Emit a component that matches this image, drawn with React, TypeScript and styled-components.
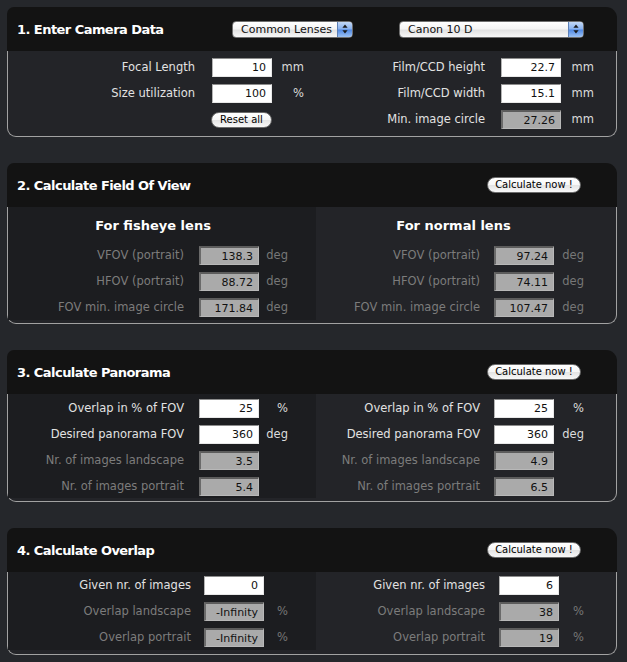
import styled, { createGlobalStyle } from "styled-components";

type Row = {
  label?: string;
  value?: string;
  unit?: string;
  ro?: boolean;
  dim?: boolean;
  button?: string;
};

type Col = {
  heading?: string;
  headShift?: number;
  dark?: boolean;
  pt: number;
  pb: number;
  unitW: number;
  pr: number;
  gap: number;
  rows: Row[];
};

type PanelData = {
  title: string;
  headRight: number;
  tools: "selects" | "calc";
  bodyPb: number;
  cols: Col[];
};

const panels: PanelData[] = [
  {
    title: "1. Enter Camera Data",
    headRight: 33,
    tools: "selects",
    bodyPb: 7,
    cols: [
      {
        pt: 7, pb: 0, unitW: 32, pr: 12, gap: 17,
        rows: [
          { label: "Focal Length", value: "10", unit: "mm" },
          { label: "Size utilization", value: "100", unit: "%" },
          { button: "Reset all" },
        ],
      },
      {
        pt: 7, pb: 0, unitW: 33, pr: 22, gap: 16,
        rows: [
          { label: "Film/CCD height", value: "22.7", unit: "mm" },
          { label: "Film/CCD width", value: "15.1", unit: "mm" },
          { label: "Min. image circle", value: "27.26", unit: "mm", ro: true },
        ],
      },
    ],
  },
  {
    title: "2. Calculate Field Of View",
    headRight: 36,
    tools: "calc",
    bodyPb: 3,
    cols: [
      {
        heading: "For fisheye lens", headShift: 18, dark: true,
        pt: 10, pb: 3, unitW: 29, pr: 28, gap: 15,
        rows: [
          { label: "VFOV (portrait)", value: "138.3", unit: "deg", ro: true, dim: true },
          { label: "HFOV (portrait)", value: "88.72", unit: "deg", ro: true, dim: true },
          { label: "FOV min. image circle", value: "171.84", unit: "deg", ro: true, dim: true },
        ],
      },
      {
        heading: "For normal lens", headShift: 25,
        pt: 10, pb: 3, unitW: 30, pr: 32, gap: 14,
        rows: [
          { label: "VFOV (portrait)", value: "97.24", unit: "deg", ro: true, dim: true },
          { label: "HFOV (portrait)", value: "74.11", unit: "deg", ro: true, dim: true },
          { label: "FOV min. image circle", value: "107.47", unit: "deg", ro: true, dim: true },
        ],
      },
    ],
  },
  {
    title: "3. Calculate Panorama",
    headRight: 36,
    tools: "calc",
    bodyPb: 3,
    cols: [
      {
        dark: true, pt: 5, pb: 2, unitW: 29, pr: 28, gap: 15,
        rows: [
          { label: "Overlap in % of FOV", value: "25", unit: "%" },
          { label: "Desired panorama FOV", value: "360", unit: "deg" },
          { label: "Nr. of images landscape", value: "3.5", ro: true, dim: true },
          { label: "Nr. of images portrait", value: "5.4", ro: true, dim: true },
        ],
      },
      {
        pt: 5, pb: 2, unitW: 30, pr: 32, gap: 14,
        rows: [
          { label: "Overlap in % of FOV", value: "25", unit: "%" },
          { label: "Desired panorama FOV", value: "360", unit: "deg" },
          { label: "Nr. of images landscape", value: "4.9", ro: true, dim: true },
          { label: "Nr. of images portrait", value: "6.5", ro: true, dim: true },
        ],
      },
    ],
  },
  {
    title: "4. Calculate Overlap",
    headRight: 36,
    tools: "calc",
    bodyPb: 4,
    cols: [
      {
        dark: true, pt: 4, pb: 3, unitW: 24, pr: 28, gap: 13,
        rows: [
          { label: "Given nr. of images", value: "0" },
          { label: "Overlap landscape", value: "-Infinity", unit: "%", ro: true, dim: true },
          { label: "Overlap portrait", value: "-Infinity", unit: "%", ro: true, dim: true },
        ],
      },
      {
        pt: 4, pb: 3, unitW: 25, pr: 32, gap: 14,
        rows: [
          { label: "Given nr. of images", value: "6" },
          { label: "Overlap landscape", value: "38", unit: "%", ro: true, dim: true },
          { label: "Overlap portrait", value: "19", unit: "%", ro: true, dim: true },
        ],
      },
    ],
  },
];

const GlobalStyle = createGlobalStyle`
  html, body {
    margin: 0;
    padding: 0;
    background: #25272b;
  }
  body {
    font-family: "DejaVu Sans", Verdana, sans-serif;
  }
`;

const Page = styled.div`
  width: 610px;
  padding: 7px 10px 7px 7px;
  display: flex;
  flex-direction: column;
  gap: 26px;
`;

const Panel = styled.section`
  width: 610px;
`;

const Header = styled.div<{ $right: number }>`
  height: 44px;
  background: #131313;
  border-radius: 7px 11px 0 0;
  display: flex;
  align-items: center;
  padding: 0 ${(p) => p.$right}px 0 10px;
`;

const Title = styled.h2`
  flex: 1;
  margin: 0;
  color: #fff;
  font-size: 13px;
  font-weight: bold;
  letter-spacing: -0.55px;
`;

const Tools = styled.div`
  display: flex;
  align-items: center;
  gap: 46px;
`;

const Popup = styled.div<{ $w: number }>`
  width: ${(p) => p.$w}px;
  height: 17px;
  box-sizing: border-box;
  border: 1px solid #6f6f6f;
  border-radius: 4px;
  overflow: hidden;
  display: flex;
  align-items: center;
  background: linear-gradient(#ffffff, #f4f4f4 45%, #e2e2e2 55%, #f7f7f7);
  font-size: 11px;
  color: #111;
`;

const PopupText = styled.span`
  flex: 1;
  padding-left: 8px;
`;

const PopupArrows = styled.span`
  width: 14px;
  align-self: stretch;
  display: flex;
  align-items: center;
  justify-content: center;
  border-left: 1px solid #5b7fb6;
  background: linear-gradient(#c3d8f6, #86b0ee 48%, #4f88e3 52%, #9cc2f4);
`;

const Pill = styled.button<{ $w: number }>`
  width: ${(p) => p.$w}px;
  height: 16px;
  box-sizing: border-box;
  padding: 0;
  border: 1px solid #6c6c6c;
  border-radius: 8px;
  background: linear-gradient(#ffffff, #f7f7f7 50%, #e4e4e4 51%, #f8f8f8);
  font-family: "DejaVu Sans", Verdana, sans-serif;
  font-size: 10px;
  color: #000;
  line-height: 14px;
  white-space: nowrap;
`;

const Body = styled.div<{ $pb: number }>`
  display: grid;
  grid-template-columns: 308px 300px;
  background: #232428;
  border: 1px solid #a2a2a2;
  border-top: none;
  border-radius: 0 0 9px 9px;
  padding-bottom: ${(p) => p.$pb}px;
`;

const Column = styled.div<{ $dark?: boolean; $pt: number; $pb: number }>`
  background: ${(p) => (p.$dark ? "#1c1d20" : "transparent")};
  padding: ${(p) => p.$pt}px 0 ${(p) => p.$pb}px;
`;

const Heading = styled.h3<{ $shift: number }>`
  margin: 0 0 11px;
  padding-right: ${(p) => p.$shift}px;
  text-align: center;
  color: #fff;
  font-size: 13px;
  font-weight: bold;
  line-height: 18px;
`;

const Rows = styled.div<{ $unit: number; $right: number }>`
  display: grid;
  grid-template-columns: 1fr 60px ${(p) => p.$unit}px;
  grid-auto-rows: 19px;
  row-gap: 7px;
  padding-right: ${(p) => p.$right}px;
`;

const Label = styled.span<{ $dim?: boolean; $gap: number }>`
  padding-right: ${(p) => p.$gap}px;
  text-align: right;
  white-space: nowrap;
  font-size: 11.5px;
  line-height: 19px;
  color: ${(p) => (p.$dim ? "#7c7c7c" : "#e2e2e2")};
`;

const Field = styled.input<{ $ro?: boolean }>`
  width: 60px;
  height: 19px;
  box-sizing: border-box;
  margin: 0;
  padding: 0 5px 0 0;
  text-align: right;
  font-family: "DejaVu Sans", Verdana, sans-serif;
  font-size: 11px;
  color: #111;
  outline: none;
  background: ${(p) => (p.$ro ? "#aaaaaa" : "#ffffff")};
  border: none;
  border-top: ${(p) => (p.$ro ? "2px solid #5c5c5c" : "1px solid #8c8c8c")};
  border-left: ${(p) => (p.$ro ? "2px solid #6a6a6a" : "1px solid #b4b4b4")};
  border-bottom: 1px solid ${(p) => (p.$ro ? "#b8b8b8" : "#e8e8e8")};
  border-right: 1px solid ${(p) => (p.$ro ? "#b8b8b8" : "#e8e8e8")};
`;

const Unit = styled.span<{ $dim?: boolean }>`
  text-align: right;
  white-space: nowrap;
  font-size: 11.5px;
  line-height: 19px;
  color: ${(p) => (p.$dim ? "#777" : "#dcdcdc")};
`;

const ButtonCell = styled.div`
  display: flex;
  align-items: center;
  margin-left: -1px;
`;

const Arrows = () => (
  <svg width="6" height="10" viewBox="0 0 6 10">
    <path d="M3 0.5 L5.6 3.8 L0.4 3.8 Z" fill="#1a1a1a" />
    <path d="M3 9.5 L5.6 6.2 L0.4 6.2 Z" fill="#1a1a1a" />
  </svg>
);

const Select = ({ text, w }: { text: string; w: number }) => (
  <Popup $w={w}>
    <PopupText>{text}</PopupText>
    <PopupArrows>
      <Arrows />
    </PopupArrows>
  </Popup>
);

const ColumnView = ({ col }: { col: Col }) => (
  <Column $dark={col.dark} $pt={col.pt} $pb={col.pb}>
    {col.heading && <Heading $shift={col.headShift || 0}>{col.heading}</Heading>}
    <Rows $unit={col.unitW} $right={col.pr}>
      {col.rows.map((r, i) =>
        r.button ? (
          [
            <Label key={i + "l"} $gap={col.gap} />,
            <ButtonCell key={i + "b"}>
              <Pill $w={61}>{r.button}</Pill>
            </ButtonCell>,
            <Unit key={i + "u"} />,
          ]
        ) : (
          [
            <Label key={i + "l"} $gap={col.gap} $dim={r.dim}>
              {r.label}
            </Label>,
            <Field key={i + "f"} $ro={r.ro} readOnly={r.ro} defaultValue={r.value} />,
            <Unit key={i + "u"} $dim={r.dim}>
              {r.unit}
            </Unit>,
          ]
        )
      )}
    </Rows>
  </Column>
);

const App = () => {
  return (
    <>
      <GlobalStyle />
      <Page>
        {panels.map((p) => (
          <Panel key={p.title}>
            <Header $right={p.headRight}>
              <Title>{p.title}</Title>
              {p.tools === "selects" ? (
                <Tools>
                  <Select text="Common Lenses" w={121} />
                  <Select text="Canon 10 D" w={185} />
                </Tools>
              ) : (
                <Pill $w={94}>Calculate now !</Pill>
              )}
            </Header>
            <Body $pb={p.bodyPb}>
              {p.cols.map((c, i) => (
                <ColumnView key={i} col={c} />
              ))}
            </Body>
          </Panel>
        ))}
      </Page>
    </>
  );
};

export default App;
